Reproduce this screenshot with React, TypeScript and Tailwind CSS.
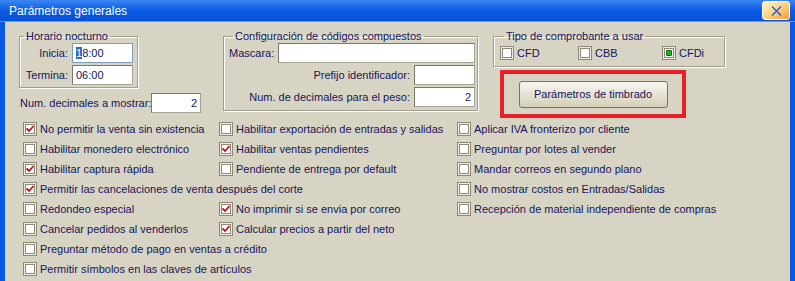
import React from 'react';

const font = { fontFamily: '"Liberation Sans", Arial, sans-serif' };

function Box({ checked, dot }: { checked?: boolean; dot?: boolean }) {
    return (
        <div className="w-[14px] h-[14px] shrink-0 border border-[#8d8978] p-px bg-[#efede3] flex">
            <div className="flex-1 border border-[#8d8978] bg-white flex items-center justify-center">
                {checked && (
                    <svg width="8" height="8" viewBox="0 0 8 8">
                        <path d="M0.5 3.5 L3 6 L7.5 1" fill="none" stroke="#c4101a" strokeWidth="1.8" />
                    </svg>
                )}
                {dot && <div className="w-[6px] h-[6px] rounded-[1px] bg-[#21b421] border border-[#0c6a0c]" />}
            </div>
        </div>
    );
}

function Check({ label, checked, span }: { label: string; checked?: boolean; span?: boolean }) {
    return (
        <div className={`flex items-center gap-[3px] h-[20px] ${span ? 'col-span-2' : ''}`}>
            <Box checked={checked} />
            <span className="whitespace-nowrap">{label}</span>
        </div>
    );
}

function Field({ w, value, right, focus }: { w: string; value?: string; right?: boolean; focus?: boolean }) {
    return (
        <div
            className={`${w} h-[20px] shrink-0 bg-white border flex items-center px-[3px] ${right ? 'justify-end' : ''} ${focus ? 'border-[#7f9db9]' : 'border-[#a7a494] border-t-[#7c796a] border-l-[#7c796a]'}`}
        >
            {focus ? (
                <span>
                    <span className="bg-[#316ac5] text-white">1</span>8:00
                </span>
            ) : (
                value
            )}
        </div>
    );
}

function Group({ title, className, children }: { title: string; className: string; children: React.ReactNode }) {
    return (
        <fieldset className={`border border-[#a29e8d] shadow-[inset_1px_1px_0_#fff,1px_1px_0_#fff] ${className}`}>
            <legend className="ml-[4px] px-[2px] leading-[14px]">{title}</legend>
            {children}
        </fieldset>
    );
}

export default function App() {
    return (
        <div className="w-[795px] h-[281px] bg-[#0a58e2] flex flex-col overflow-hidden text-[11px] text-[#15155e]" style={font}>
            <div className="h-[22px] shrink-0 flex items-center justify-between pl-[9px] pr-[5px] bg-gradient-to-b from-[#3a86f4] via-[#0a5ae4] to-[#0752d6] border-b border-[#5a9cf8]">
                <span className="text-white text-[12px]">Parámetros generales</span>
                <div className="w-[28px] h-[19px] border border-white rounded-[3px] bg-gradient-to-br from-[#fff3c0] via-[#fbd27e] to-[#ef9a36] flex items-center justify-center">
                    <svg width="11" height="10" viewBox="0 0 11 10">
                        <path d="M1 0.5 L10 9.5 M10 0.5 L1 9.5" stroke="#1c5ee8" strokeWidth="1.3" />
                    </svg>
                </div>
            </div>
            <div className="flex-1 mx-[5px] bg-[#d8d4c4] flex flex-col">
                <div className="flex pt-[7px] pl-[14px] h-[97px]">
                    <div className="w-[182px] shrink-0 flex flex-col">
                        <Group title="Horario nocturno" className="w-[119px] pb-[2px] pr-[4px]">
                            <div className="flex flex-col gap-[2px]">
                                <div className="flex items-center justify-end gap-[4px]">
                                    <span>Inicia:</span>
                                    <Field w="w-[61px]" focus />
                                </div>
                                <div className="flex items-center justify-end gap-[4px]">
                                    <span>Termina:</span>
                                    <Field w="w-[61px]" value="06:00" />
                                </div>
                            </div>
                        </Group>
                        <div className="flex items-center mt-[5px] pl-[1px]">
                            <span className="w-[131px] whitespace-nowrap">Num. decimales a mostrar:</span>
                            <Field w="w-[50px]" value="2" right />
                        </div>
                    </div>
                    <Group title="Configuración de códigos compuestos" className="ml-[22px] w-[255px] self-start pl-[5px] pr-[2px] pb-[3px]">
                        <div className="flex flex-col gap-[2px]">
                            <div className="flex items-center gap-[4px]">
                                <span>Mascara:</span>
                                <Field w="flex-1" />
                            </div>
                            <div className="flex items-center justify-end gap-[4px]">
                                <span>Prefijo identificador:</span>
                                <Field w="w-[61px]" />
                            </div>
                            <div className="flex items-center justify-end gap-[4px]">
                                <span>Num. de decimales para el peso:</span>
                                <Field w="w-[61px]" value="2" right />
                            </div>
                        </div>
                    </Group>
                    <div className="ml-[15px] flex flex-col">
                        <Group title="Tipo de comprobante a usar" className="w-[232px] h-[38px] pl-[6px]">
                            <div className="flex items-center h-[20px]">
                                <div className="w-[78px] flex items-center gap-[3px]"><Box />CFD</div>
                                <div className="w-[84px] flex items-center gap-[3px]"><Box />CBB</div>
                                <div className="flex items-center gap-[3px]"><Box dot />CFDi</div>
                            </div>
                        </Group>
                        <div className="ml-[7px] mt-[3px] w-[186px] h-[48px] border-4 border-[#e8202a] flex items-center justify-center">
                            <div className="w-[149px] h-[27px] rounded-[3px] border border-[#787360] bg-gradient-to-b from-[#f7f6f1] to-[#d5cfb8] flex items-center justify-center">
                                Parámetros de timbrado
                            </div>
                        </div>
                    </div>
                </div>
                <div className="grid grid-cols-[196px_238px_1fr] pl-[18px]">
                    <Check label="No permitir la venta sin existencia" checked />
                    <Check label="Habilitar exportación de entradas y salidas" />
                    <Check label="Aplicar IVA fronterizo por cliente" />
                    <Check label="Habilitar monedero electrónico" />
                    <Check label="Habilitar ventas pendientes" checked />
                    <Check label="Preguntar por lotes al vender" />
                    <Check label="Habilitar captura rápida" checked />
                    <Check label="Pendiente de entrega por default" />
                    <Check label="Mandar correos en segundo plano" />
                    <Check label="Permitir las cancelaciones de venta después del corte" checked span />
                    <Check label="No mostrar costos en Entradas/Salidas" />
                    <Check label="Redondeo especial" />
                    <Check label="No imprimir si se envia por correo" checked />
                    <Check label="Recepción de material independiente de compras" />
                    <Check label="Cancelar pedidos al venderlos" />
                    <Check label="Calcular precios a partir del neto" checked />
                    <div />
                    <Check label="Preguntar método de pago en ventas a crédito" span />
                    <div />
                    <Check label="Permitir símbolos en las claves de artículos" span />
                </div>
            </div>
        </div>
    );
}
